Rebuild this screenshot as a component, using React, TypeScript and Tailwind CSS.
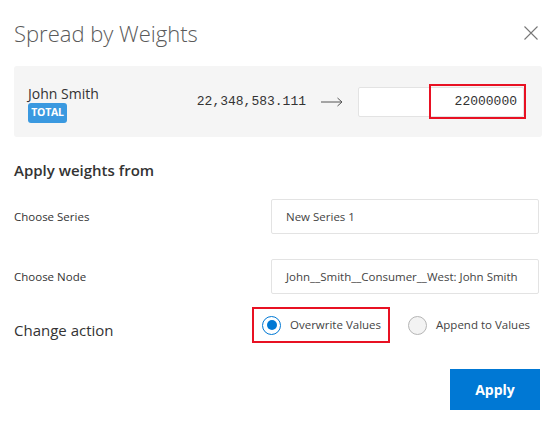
import React from 'react';

function Radio({ checked }: { checked: boolean }) {
  return checked ? (
    <span className="flex h-[19px] w-[19px] items-center justify-center rounded-full border border-[#0078d4] bg-white">
      <span className="h-[10px] w-[10px] rounded-full bg-[#0078d4]" />
    </span>
  ) : (
    <span className="h-[19px] w-[19px] rounded-full border border-[#b5b5b5] bg-[#f3f3f3]" />
  );
}

export default function App() {
  return (
    <div
      className="relative h-[423px] w-[556px] bg-white text-[#333]"
      style={{ fontFamily: '"Open Sans", "Noto Sans", sans-serif' }}
    >
      <div className="flex items-center justify-between pl-[14px] pr-[18px] pt-[19px]">
        <h2 className="text-[22px] leading-[28px] font-light text-[#5a5a5a]">Spread by Weights</h2>
        <button className="text-[#777]">
          <svg width="14" height="14" viewBox="0 0 14 14" fill="none" stroke="currentColor" strokeWidth="1.1">
            <path d="M0.5 0.5 L13.5 13.5 M13.5 0.5 L0.5 13.5" />
          </svg>
        </button>
      </div>

      <div className="mx-[14px] mt-[19px] flex h-[71px] items-center rounded-[3px] bg-[#f5f5f5] pl-[14px] pr-[18px]">
        <div className="flex flex-col pt-[4px]">
          <span className="text-[14px] leading-[17px] text-[#333]">John Smith</span>
          <span className="mt-[1px] flex h-[20px] w-[39px] items-center justify-center rounded-[3px] bg-[#3a99e0] text-[10.5px] font-bold tracking-[-0.2px] text-white">
            TOTAL
          </span>
        </div>
        <span
          className="ml-auto text-[13px] text-[#333]"
          style={{ fontFamily: '"Liberation Mono", monospace' }}
        >
          22,348,583.111
        </span>
        <span className="ml-[15px] flex h-[10px] w-[22px] items-center text-[#555]">
          <svg width="22" height="10" viewBox="0 0 22 10" fill="none" stroke="currentColor" strokeWidth="1">
            <path d="M0 5 H21 M16.5 1 L21 5 L16.5 9" />
          </svg>
        </span>
        <div className="relative ml-[15px]">
          <div
            className="flex h-[30px] w-[166px] items-center justify-end rounded-[2px] border border-[#e3e3e3] bg-white pr-[6px] text-[13px] text-[#333]"
            style={{ fontFamily: '"Liberation Mono", monospace' }}
          >
            22000000
          </div>
          <div className="absolute left-[71px] top-[-3px] h-[35px] w-[97px] border-2 border-[#e81123]" />
        </div>
      </div>

      <h3 className="mt-[23px] px-[14px] text-[15px] leading-[20px] font-semibold text-[#333]">Apply weights from</h3>

      <div className="mt-[19px] flex flex-col gap-[25px] pl-[14px] pr-[17px]">
        <div className="flex items-center justify-between">
          <span className="text-[11.5px] text-[#333]">Choose Series</span>
          <div className="flex h-[35px] w-[268px] items-center rounded-[2px] border border-[#e3e3e3] bg-white pl-[14px] text-[11.5px] text-[#444]">
            New Series 1
          </div>
        </div>
        <div className="flex items-center justify-between">
          <span className="text-[11.5px] text-[#333]">Choose Node</span>
          <div className="flex h-[35px] w-[268px] items-center whitespace-nowrap rounded-[2px] border border-[#e3e3e3] bg-white pl-[14px] text-[11.5px] text-[#444]">
            John__Smith__Consumer__West: John Smith
          </div>
        </div>
      </div>

      <div className="mt-[13px] flex items-center pl-[14px]">
        <span className="w-[238px] pt-[10px] text-[15px] text-[#333]">Change action</span>
        <div className="flex h-[36px] items-center gap-[9px] border-2 border-[#e81123] pl-[8px] pr-[7px]">
          <Radio checked />
          <span className="text-[11.5px] text-[#444]">Overwrite Values</span>
        </div>
        <div className="ml-[18px] flex items-center gap-[9px]">
          <Radio checked={false} />
          <span className="text-[11.5px] text-[#444]">Append to Values</span>
        </div>
      </div>

      <div className="mt-[26px] flex justify-end pr-[16px]">
        <button className="h-[41px] w-[90px] bg-[#0078d4] text-[14px] font-bold text-white">Apply</button>
      </div>
    </div>
  );
}
